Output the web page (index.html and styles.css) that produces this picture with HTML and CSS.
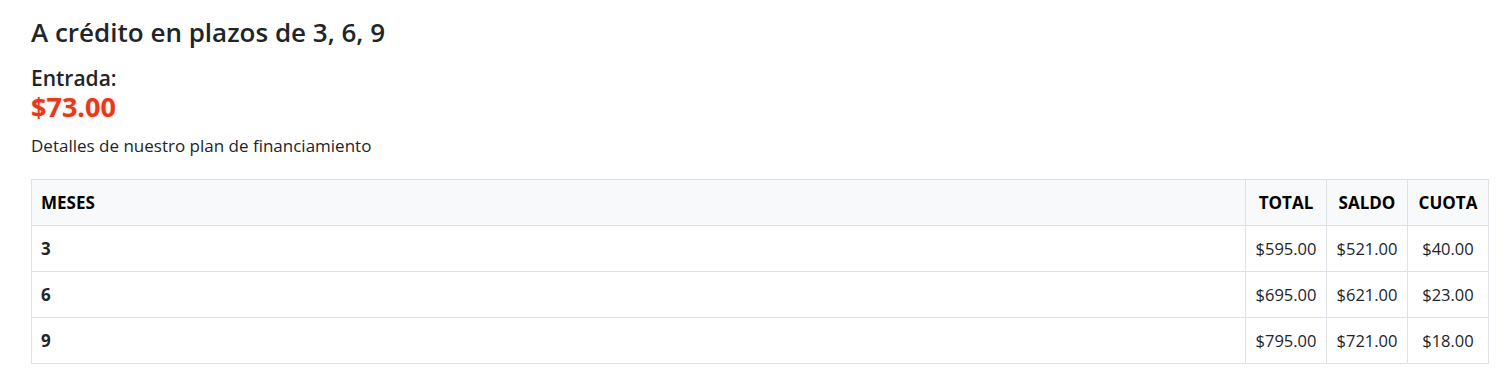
FILE: index.html
```html
<!DOCTYPE html>
<html lang="es">
<head>
<meta charset="utf-8">
<link rel="stylesheet" href="styles.css">
</head>
<body>
<div class="wrap">
  <h4 class="title">A crédito en plazos de 3, 6, 9</h4>
  <div class="entry">
    <div class="entry-label">Entrada:</div>
    <div class="entry-value">$73.00</div>
  </div>
  <p class="desc">Detalles de nuestro plan de financiamiento</p>
  <table class="plan">
    <thead>
      <tr><th class="c-meses">MESES</th><th class="c-num">TOTAL</th><th class="c-num">SALDO</th><th class="c-num">CUOTA</th></tr>
    </thead>
    <tbody>
      <tr><th class="c-meses">3</th><td>$595.00</td><td>$521.00</td><td>$40.00</td></tr>
      <tr><th class="c-meses">6</th><td>$695.00</td><td>$621.00</td><td>$23.00</td></tr>
      <tr><th class="c-meses">9</th><td>$795.00</td><td>$721.00</td><td>$18.00</td></tr>
    </tbody>
  </table>
</div>
</body>
</html>
```
FILE: styles.css
```css
* { box-sizing: border-box; }
body {
  margin: 0;
  background: #fff;
  color: #212529;
  font-family: "Open Sans", "Noto Sans", sans-serif;
}
.wrap {
  padding: 15px 20px 0 31px;
}
.title {
  margin: 0;
  font-size: 26px;
  line-height: 34px;
  font-weight: 600;
}
.entry {
  margin-top: 17px;
}
.entry-label {
  font-size: 21px;
  line-height: 25px;
  font-weight: 600;
}
.entry-value {
  font-size: 27px;
  line-height: 32px;
  font-weight: 700;
  color: #e23c1c;
  text-shadow: 0 0 3px rgba(226, 60, 28, 0.25);
}
.desc {
  margin: 11px 0 0;
  font-size: 17px;
  line-height: 24px;
}
.plan {
  margin-top: 21px;
  width: 100%;
  border-collapse: collapse;
  font-size: 16.5px;
}
.plan th, .plan td {
  border: 1px solid #dee2e6;
  height: 46px;
  padding: 0 9px;
  vertical-align: middle;
}
.plan thead th {
  background: #f8f9fa;
  color: #000;
  font-weight: 700;
  font-size: 17px;
  text-align: left;
}
.plan thead th.c-num { text-align: center; }
.plan tbody th {
  text-align: left;
  font-weight: 700;
  font-size: 17px;
}
.plan td {
  width: 81px;
  text-align: center;
  white-space: nowrap;
}
.plan .c-num { width: 81px; }
```
